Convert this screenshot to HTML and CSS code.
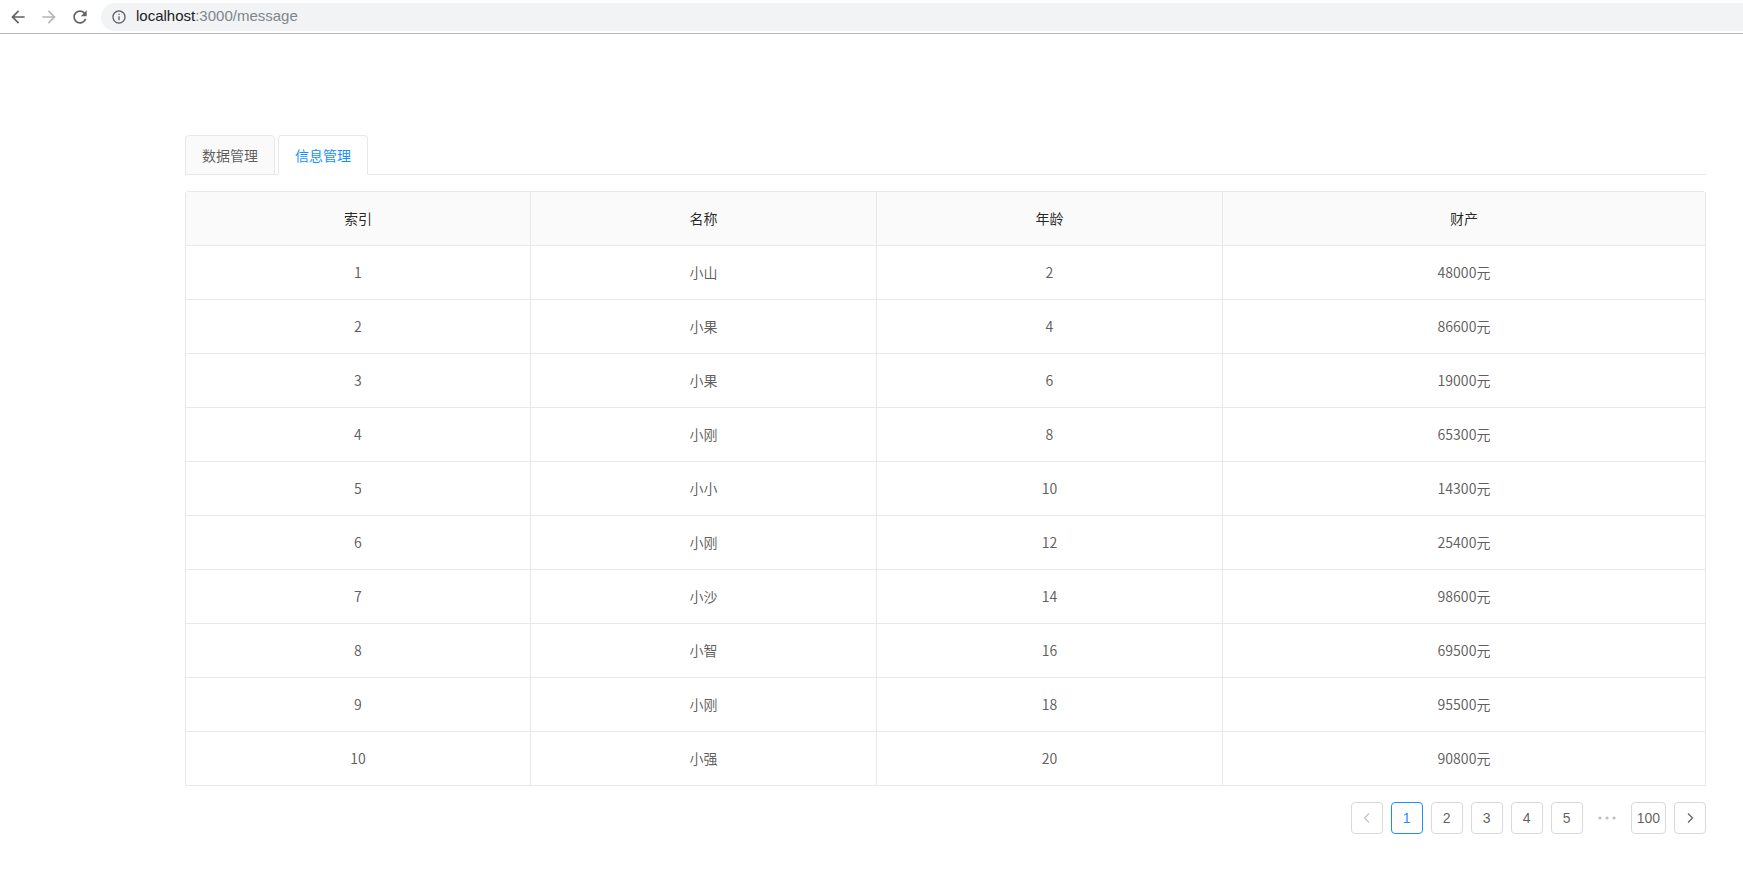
FILE: index.html
```html
<!DOCTYPE html>
<html lang="zh-CN">
<head>
    <meta charset="UTF-8">
    <title>message</title>
    <link rel="stylesheet" href="styles.css">
</head>
<body>
    <div class="toolbar">
        <span class="nav-btn">
            <svg width="20" height="20" viewBox="0 0 24 24"><path fill="#5f6368" d="M20 11H7.83l5.59-5.59L12 4l-8 8 8 8 1.41-1.41L7.83 13H20v-2z"/></svg>
        </span>
        <span class="nav-btn">
            <svg width="20" height="20" viewBox="0 0 24 24"><path fill="#b4b7bb" d="M4 11h12.17l-5.59-5.59L12 4l8 8-8 8-1.41-1.41L16.17 13H4v-2z"/></svg>
        </span>
        <span class="nav-btn">
            <svg width="20" height="20" viewBox="0 0 24 24"><path fill="#5f6368" d="M17.65 6.35C16.2 4.9 14.21 4 12 4c-4.42 0-7.990 3.58-7.99 8s3.57 8 7.99 8c3.73 0 6.84-2.55 7.73-6h-2.08c-.82 2.33-3.04 4-5.65 4-3.310 0-6-2.69-6-6s2.69-6 6-6c1.66 0 3.14.69 4.22 1.78L13 11h7V4l-2.35 2.35z"/></svg>
        </span>
        <div class="omnibox">
            <svg class="info-icon" width="16" height="16" viewBox="0 0 24 24"><path fill="#5f6368" d="M11 7h2v2h-2zm0 4h2v6h-2zm1-9C6.48 2 2 6.48 2 12s4.48 10 10 10 10-4.48 10-10S17.52 2 12 2zm0 18c-4.41 0-8-3.59-8-8s3.59-8 8-8 8 3.59 8 8-3.59 8-8 8z"/></svg>
            <span class="host">localhost</span><span class="path">:3000/message</span>
        </div>
    </div>

    <div class="page">
        <div class="tabs-nav">
            <div class="tab">数据管理</div>
            <div class="tab tab-active">信息管理</div>
        </div>

        <div class="table-wrap">
            <table class="data-table">
                <thead>
                    <tr>
                        <th class="col-fixed">索引</th>
                        <th class="col-fixed">名称</th>
                        <th class="col-fixed">年龄</th>
                        <th>财产</th>
                    </tr>
                </thead>
                <tbody>
                    <tr><td>1</td><td>小山</td><td>2</td><td>48000元</td></tr>
                    <tr><td>2</td><td>小果</td><td>4</td><td>86600元</td></tr>
                    <tr><td>3</td><td>小果</td><td>6</td><td>19000元</td></tr>
                    <tr><td>4</td><td>小刚</td><td>8</td><td>65300元</td></tr>
                    <tr><td>5</td><td>小小</td><td>10</td><td>14300元</td></tr>
                    <tr><td>6</td><td>小刚</td><td>12</td><td>25400元</td></tr>
                    <tr><td>7</td><td>小沙</td><td>14</td><td>98600元</td></tr>
                    <tr><td>8</td><td>小智</td><td>16</td><td>69500元</td></tr>
                    <tr><td>9</td><td>小刚</td><td>18</td><td>95500元</td></tr>
                    <tr><td>10</td><td>小强</td><td>20</td><td>90800元</td></tr>
                </tbody>
            </table>
        </div>

        <ul class="pagination">
            <li class="page-item page-disabled">
                <svg width="12" height="12" viewBox="0 0 12 12"><polyline points="8,1.5 3.5,6 8,10.5" fill="none" stroke="currentColor" stroke-width="1.1"/></svg>
            </li>
            <li class="page-item page-active">1</li>
            <li class="page-item">2</li>
            <li class="page-item">3</li>
            <li class="page-item">4</li>
            <li class="page-item">5</li>
            <li class="page-ellipsis">
                <svg width="18" height="4" viewBox="0 0 18 4"><circle cx="2" cy="2" r="1.6"/><circle cx="9" cy="2" r="1.6"/><circle cx="16" cy="2" r="1.6"/></svg>
            </li>
            <li class="page-item">100</li>
            <li class="page-item">
                <svg width="12" height="12" viewBox="0 0 12 12"><polyline points="4,1.5 8.5,6 4,10.5" fill="none" stroke="currentColor" stroke-width="1.1"/></svg>
            </li>
        </ul>
    </div>
</body>
</html>
```

FILE: styles.css
```css
body {
    margin: 0;
    font-family: "Noto Sans CJK SC", "Noto Sans", sans-serif;
    font-size: 14px;
    line-height: 1.5;
    color: rgba(0, 0, 0, 0.65);
    background: #fff;
}
.toolbar {
    height: 33px;
    border-bottom: 1px solid #b6b6b6;
    display: flex;
    align-items: center;
    padding-left: 6px;
}
.nav-btn {
    width: 24px;
    height: 24px;
    margin-right: 7px;
    display: flex;
    align-items: center;
    justify-content: center;
}
.omnibox {
    flex: 1;
    height: 28px;
    margin-left: 2px;
    background: #f1f3f4;
    border-radius: 14px 0 0 14px;
    display: flex;
    align-items: center;
    padding-left: 10px;
    font-family: "Liberation Sans", Arial, sans-serif;
    font-size: 15px;
}
.info-icon { margin-right: 9px; }
.host { color: #202124; }
.path { color: #80868b; }

.page {
    padding: 101px 37px 0 185px;
}
.tabs-nav {
    display: flex;
    border-bottom: 1px solid #e8e8e8;
    margin-bottom: 16px;
}
.tab {
    height: 38px;
    line-height: 38px;
    padding: 0 16px;
    margin-right: 3px;
    margin-bottom: -1px;
    border: 1px solid #e8e8e8;
    border-radius: 4px 4px 0 0;
    background: #fafafa;
    color: rgba(0, 0, 0, 0.65);
}
.tab-active {
    background: #fff;
    border-bottom-color: #fff;
    color: #1890ff;
}

.table-wrap {
    border-top: 1px solid #e8e8e8;
    border-left: 1px solid #e8e8e8;
    border-radius: 4px 4px 0 0;
}
.data-table {
    width: 100%;
    table-layout: fixed;
    border-collapse: separate;
    border-spacing: 0;
}
.data-table th,
.data-table td {
    padding: 16px;
    text-align: center;
    border-right: 1px solid #e8e8e8;
    border-bottom: 1px solid #e8e8e8;
    font-weight: normal;
    box-sizing: border-box;
}
.data-table th {
    background: #fafafa;
    color: rgba(0, 0, 0, 0.85);
}
.data-table .col-fixed { width: 346px; }
.data-table th:first-child { width: 345px; }

.pagination {
    list-style: none;
    margin: 16px 0 0;
    padding: 0;
    display: flex;
    justify-content: flex-end;
    gap: 8px;
}
.page-item {
    min-width: 32px;
    height: 32px;
    box-sizing: border-box;
    padding: 0 5px;
    border: 1px solid #d9d9d9;
    border-radius: 4px;
    display: flex;
    align-items: center;
    justify-content: center;
    color: rgba(0, 0, 0, 0.65);
    font-family: "Liberation Sans", Arial, sans-serif;
}
.page-active {
    border-color: #1890ff;
    color: #1890ff;
}
.page-disabled { color: rgba(0, 0, 0, 0.25); }
.page-ellipsis {
    width: 32px;
    height: 32px;
    display: flex;
    align-items: center;
    justify-content: center;
    fill: rgba(0, 0, 0, 0.25);
}
```
